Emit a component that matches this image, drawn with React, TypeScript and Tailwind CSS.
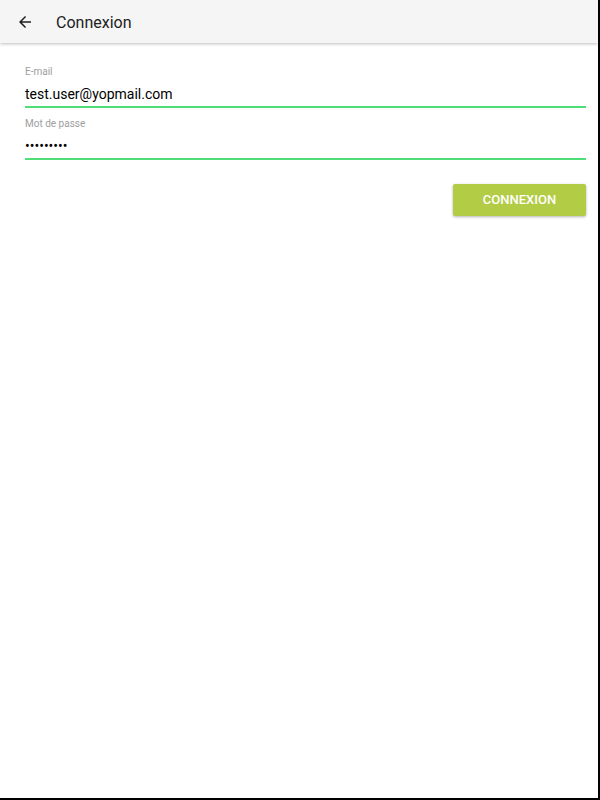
import React from 'react';

const font = { fontFamily: 'Roboto, "Noto Sans", sans-serif' };

function Field({ label, value }: { label: string; value: string }) {
  return (
    <div className="flex flex-col">
      <label className="text-[10px] leading-[14px] text-[#9e9e9e]">{label}</label>
      <div className="mt-[6px] h-[23px] border-b-2 border-[#4ddf75] text-[14px] leading-[18px] text-black">
        {value}
      </div>
    </div>
  );
}

export default function App() {
  return (
    <div
      className="h-[800px] w-[600px] border-b-2 border-r-2 border-black bg-white"
      style={font}
    >
      <header className="flex h-[43px] items-center bg-[#f5f5f5] shadow-[0_1px_3px_rgba(0,0,0,0.25)]">
        <svg
          className="ml-[16px] mt-[1px] h-[18px] w-[18px] text-[#212121]"
          viewBox="0 0 24 24"
          fill="currentColor"
        >
          <path d="M20 11H7.83l5.59-5.59L12 4l-8 8 8 8 1.41-1.41L7.83 13H20v-2z" />
        </svg>
        <h1 className="ml-[22px] mt-[2px] text-[16px] font-normal text-[#212121]">Connexion</h1>
      </header>
      <main className="flex flex-col px-[25px] pt-[22px] pr-[12px]">
        <div className="flex flex-col gap-[9px]">
          <Field label="E-mail" value="test.user@yopmail.com" />
          <Field label="Mot de passe" value="•••••••••" />
        </div>
        <div className="mt-[24px] flex justify-end">
          <button className="h-[32px] w-[133px] rounded-[2px] bg-[#b3cc45] text-[13px] font-medium text-white shadow-[0_1px_3px_rgba(0,0,0,0.3)]">
            CONNEXION
          </button>
        </div>
      </main>
    </div>
  );
}
